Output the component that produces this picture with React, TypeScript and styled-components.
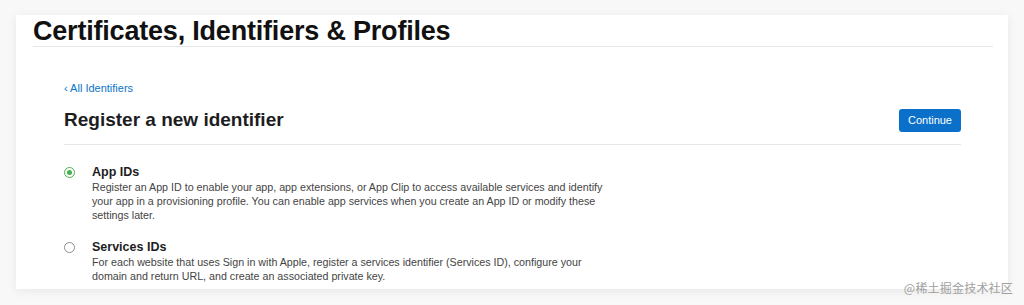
import React from "react";
import styled, { createGlobalStyle } from "styled-components";

const Global = createGlobalStyle`
  html, body { margin: 0; padding: 0; background: #f8f8f8; }
  body { font-family: "Liberation Sans", "Noto Sans CJK SC", Arial, sans-serif; color: #1d1d1f; }
  * { box-sizing: border-box; }
`;

const Page = styled.div`
  width: 1024px;
  height: 305px;
  padding: 15px 16px 0 16px;
  position: relative;
  overflow: hidden;
`;

const Card = styled.div`
  width: 992px;
  height: 274px;
  background: #fff;
  box-shadow: 0 2px 10px rgba(0, 0, 0, 0.07);
  padding: 0 15px 0 17px;
  overflow: hidden;
`;

const Header = styled.header`
  border-bottom: 1px solid #e6e6e6;
  height: 32px;
  padding-top: 2px;
`;

const Title = styled.h1`
  margin: 0;
  font-size: 27px;
  font-weight: 700;
  letter-spacing: -0.2px;
  line-height: 28px;
  color: #111;
`;

const Content = styled.section`
  padding: 34px 32px 0 31px;
`;

const BackLink = styled.a`
  display: block;
  font-size: 11px;
  line-height: 14px;
  color: #0a74c9;
  text-decoration: none;
`;

const TitleRow = styled.div`
  display: flex;
  align-items: center;
  justify-content: space-between;
  margin-top: 13px;
  padding-bottom: 12px;
  border-bottom: 1px solid #e6e6e6;
`;

const SubTitle = styled.h2`
  margin: 0;
  font-size: 19px;
  font-weight: 700;
  line-height: 24px;
  color: #1d1d1f;
`;

const Button = styled.button`
  height: 23px;
  padding: 0 9px;
  background: #0a70c9;
  color: #fff;
  border: none;
  border-radius: 3px;
  font-family: inherit;
  font-size: 11px;
`;

const List = styled.div`
  display: flex;
  flex-direction: column;
  gap: 17px;
  padding-top: 19px;
`;

const Option = styled.label`
  display: flex;
  align-items: flex-start;
  gap: 17px;
`;

const Radio = styled.span<{ $checked?: boolean }>`
  width: 11px;
  height: 11px;
  margin-top: 3px;
  flex: none;
  border-radius: 50%;
  border: 1px solid ${(p) => (p.$checked ? "#4cae4f" : "#8e8e8e")};
  display: flex;
  align-items: center;
  justify-content: center;
  ${(p) => (p.$checked ? "border-width: 1.5px;" : "")}
  &::after {
    content: "";
    width: 5px;
    height: 5px;
    border-radius: 50%;
    background: ${(p) => (p.$checked ? "#4cae4f" : "transparent")};
  }
`;

const OptionBody = styled.div`
  display: flex;
  flex-direction: column;
`;

const OptionTitle = styled.div`
  font-size: 12.5px;
  line-height: 16px;
  font-weight: 700;
  color: #1d1d1f;
`;

const OptionDesc = styled.p<{ $width: number }>`
  margin: 0;
  font-size: 10.7px;
  line-height: 14px;
  color: #444;
  max-width: ${(p) => p.$width}px;
`;

const Watermark = styled.div`
  position: absolute;
  right: 11px;
  bottom: 9px;
  font-size: 12px;
  color: #a0a0a0;
  font-family: "Noto Sans CJK SC", sans-serif;
  letter-spacing: 0.2px;
`;

export default function App() {
  return (
    <>
      <Global />
      <Page>
        <Card>
          <Header>
            <Title>Certificates, Identifiers &amp; Profiles</Title>
          </Header>
          <Content>
            <BackLink href="#">‹ All Identifiers</BackLink>
            <TitleRow>
              <SubTitle>Register a new identifier</SubTitle>
              <Button>Continue</Button>
            </TitleRow>
            <List>
              <Option>
                <Radio $checked />
                <OptionBody>
                  <OptionTitle>App IDs</OptionTitle>
                  <OptionDesc $width={520}>
                    Register an App ID to enable your app, app extensions, or App Clip to access available services and identify your app in a provisioning profile. You can enable app services when you create an App ID or modify these settings later.
                  </OptionDesc>
                </OptionBody>
              </Option>
              <Option>
                <Radio />
                <OptionBody>
                  <OptionTitle>Services IDs</OptionTitle>
                  <OptionDesc $width={500}>
                    For each website that uses Sign in with Apple, register a services identifier (Services ID), configure your domain and return URL, and create an associated private key.
                  </OptionDesc>
                </OptionBody>
              </Option>
            </List>
          </Content>
        </Card>
        <Watermark>@稀土掘金技术社区</Watermark>
      </Page>
    </>
  );
}
